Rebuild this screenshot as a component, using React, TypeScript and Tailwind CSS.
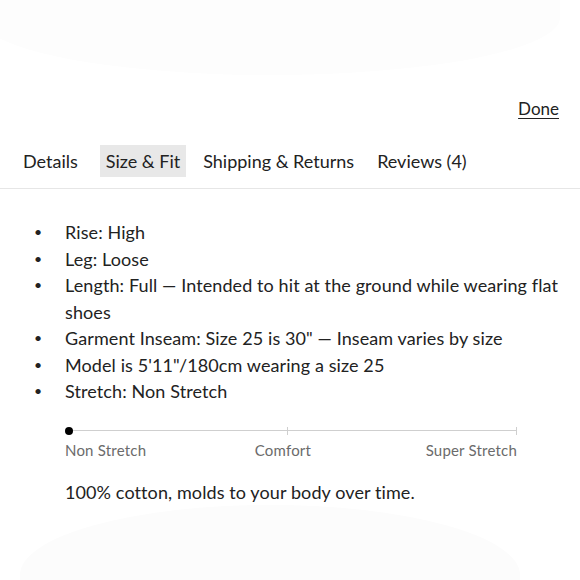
import React from 'react';

const tabs = ['Details', 'Size & Fit', 'Shipping & Returns', 'Reviews (4)'];

const fitNotes = [
  'Rise: High',
  'Leg: Loose',
  'Length: Full — Intended to hit at the ground while wearing flat shoes',
  'Garment Inseam: Size 25 is 30" — Inseam varies by size',
  'Model is 5\'11"/180cm wearing a size 25',
  'Stretch: Non Stretch',
];

export default function App() {
  const active = 'Size & Fit';

  return (
    <div className="relative w-[580px] h-[580px] overflow-hidden bg-white text-[#222] font-['Lato','Liberation_Sans',sans-serif]">
      {/* faint backdrop shapes */}
      <div className="absolute left-[-20px] right-[20px] top-[-40px] h-[115px] rounded-b-[50%] bg-[#fdfdfd]" />
      <div className="absolute left-[20px] right-[60px] top-[505px] h-[140px] rounded-t-[50%] bg-[#fcfcfc]" />

      <div className="relative">
        <div className="h-[98px]" />

        <div className="flex justify-end pr-[21px]">
          <button className="text-[17px] leading-[22px] underline underline-offset-[3px]">Done</button>
        </div>

        {/* tabs */}
        <div className="mt-[25px] flex items-center gap-[11px] pl-[17px] pb-[11px] border-b border-[#e6e6e6]">
          {tabs.map((t, i) => (
            <div
              key={t}
              className={`h-[32px] px-[6px] flex items-center text-[18px] ${i === 0 ? 'mr-[5px]' : ''} ${t === active ? 'bg-[#e8e8e8]' : ''}`}
            >
              {t}
            </div>
          ))}
        </div>

        {/* fit notes */}
        <ul className="mt-[30px] pr-[20px] text-[18px] leading-[26.5px] tracking-[0.1px]">
          {fitNotes.map(n => (
            <li key={n} className="flex">
              <span className="w-[65px] shrink-0 pl-[34px] text-[14px]">•</span>
              <span>{n}</span>
            </li>
          ))}
        </ul>

        {/* stretch scale */}
        <div className="ml-[65px] mr-[63px] mt-[21px]">
          <div className="relative h-[10px]">
            <div className="absolute left-[4px] right-0 top-[4.5px] h-px bg-[#cfcfcf]" />
            <div className="absolute left-[222px] top-[1px] h-[8px] w-px bg-[#cfcfcf]" />
            <div className="absolute right-0 top-[1px] h-[8px] w-px bg-[#cfcfcf]" />
            <div className="absolute left-0 top-[1px] h-[8px] w-[8px] rounded-full bg-black" />
          </div>
          <div className="mt-[5px] flex justify-between text-[15px] leading-[18px] text-[#6b6b6b] tracking-[0.2px]">
            <span>Non Stretch</span>
            <span className="-ml-[6px]">Comfort</span>
            <span>Super Stretch</span>
          </div>
        </div>

        <p className="ml-[65px] mt-[20px] text-[18px] leading-[26px] tracking-[0.1px]">100% cotton, molds to your body over time.</p>
      </div>
    </div>
  );
}
